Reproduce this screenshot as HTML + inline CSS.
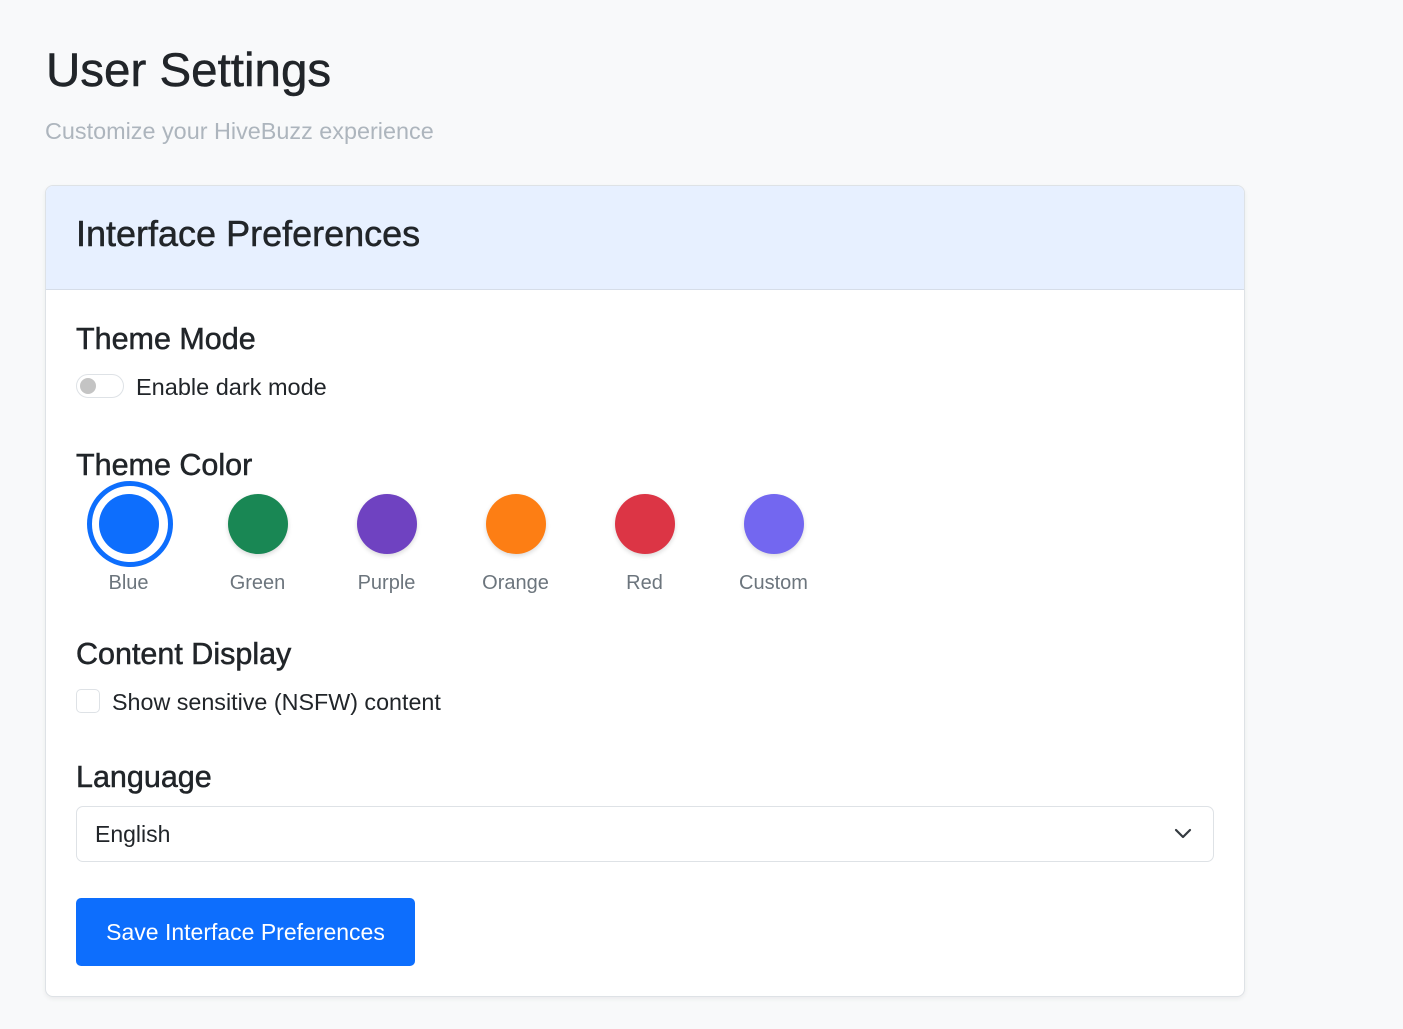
<!DOCTYPE html>
<html><head><meta charset="utf-8"><style>
*{margin:0;padding:0;box-sizing:border-box}
body{width:1403px;height:1029px;background:#f8f9fa;font-family:"Liberation Sans",sans-serif;color:#212529;position:relative;overflow:hidden}
.a{position:absolute;white-space:nowrap}
.m{-webkit-text-stroke:0.5px #212529}
.card{position:absolute;left:45px;top:185px;width:1200px;height:812px;background:#fff;border:1px solid #dee2e6;border-radius:8px;box-shadow:0 2px 5px rgba(0,0,0,.06);overflow:hidden}
.hdr{position:absolute;left:0;top:0;width:100%;height:104px;background:#e7f0ff;border-bottom:1px solid #d6dde8}
.c{position:absolute;width:60px;height:60px;border-radius:50%;top:308px;box-shadow:0 2px 5px rgba(0,0,0,.15)}
.l{position:absolute;top:386px;width:129px;text-align:center;font-size:20px;color:#6c757d}
.h{font-size:30.5px}
</style></head><body>
<div class="a m" style="left:46px;top:43px;font-size:47.5px;">User Settings</div>
<div class="a" style="left:45px;top:118px;font-size:23.4px;color:#adb5bd;">Customize your HiveBuzz experience</div>
<div class="card">
 <div class="hdr"></div>
 <div class="a m" style="left:30px;top:27px;font-size:36px;">Interface Preferences</div>
 <div class="a m h" style="left:30px;top:136px;">Theme Mode</div>
 <div class="a" style="left:30px;top:188px;width:48px;height:24px;border:1px solid #dee2e6;border-radius:12px;"></div>
 <div class="a" style="left:34px;top:192px;width:16px;height:16px;border-radius:50%;background:#c4c4c4;"></div>
 <div class="a" style="left:90px;top:188px;font-size:23.5px;">Enable dark mode</div>
 <div class="a m h" style="left:30px;top:262px;">Theme Color</div>
 <div class="a" style="left:41px;top:295px;width:86px;height:86px;border-radius:50%;border:5px solid #0d6efd;"></div>
 <div class="c" style="left:53px;background:#0d6efd;box-shadow:none"></div>
 <div class="c" style="left:182px;background:#198754"></div>
 <div class="c" style="left:311px;background:#6f42c1"></div>
 <div class="c" style="left:440px;background:#fd7e14"></div>
 <div class="c" style="left:569px;background:#dc3545"></div>
 <div class="c" style="left:698px;background:#7367f0"></div>
 <div class="l" style="left:18px">Blue</div>
 <div class="l" style="left:147px">Green</div>
 <div class="l" style="left:276px">Purple</div>
 <div class="l" style="left:405px">Orange</div>
 <div class="l" style="left:534px">Red</div>
 <div class="l" style="left:663px">Custom</div>
 <div class="a m h" style="left:30px;top:451px;">Content Display</div>
 <div class="a" style="left:30px;top:503px;width:24px;height:24px;border:1px solid #dee2e6;border-radius:5px;"></div>
 <div class="a" style="left:66px;top:503px;font-size:23.3px;">Show sensitive (NSFW) content</div>
 <div class="a m h" style="left:30px;top:574px;">Language</div>
 <div class="a" style="left:30px;top:620px;width:1138px;height:56px;border:1px solid #dee2e6;border-radius:7px;"></div>
 <div class="a" style="left:49px;top:635px;font-size:23px;">English</div>
 <svg class="a" style="left:1128px;top:640px" width="18" height="14" viewBox="0 0 18 14"><path d="M2 4l7 7 7-7" fill="none" stroke="#343a40" stroke-width="2.2" stroke-linecap="round" stroke-linejoin="round"/></svg>
 <div class="a" style="left:30px;top:712px;width:339px;height:68px;background:#0d6efd;border-radius:5px;color:#fff;font-size:23px;text-align:center;line-height:68px;">Save Interface Preferences</div>
</div>
</body></html>
